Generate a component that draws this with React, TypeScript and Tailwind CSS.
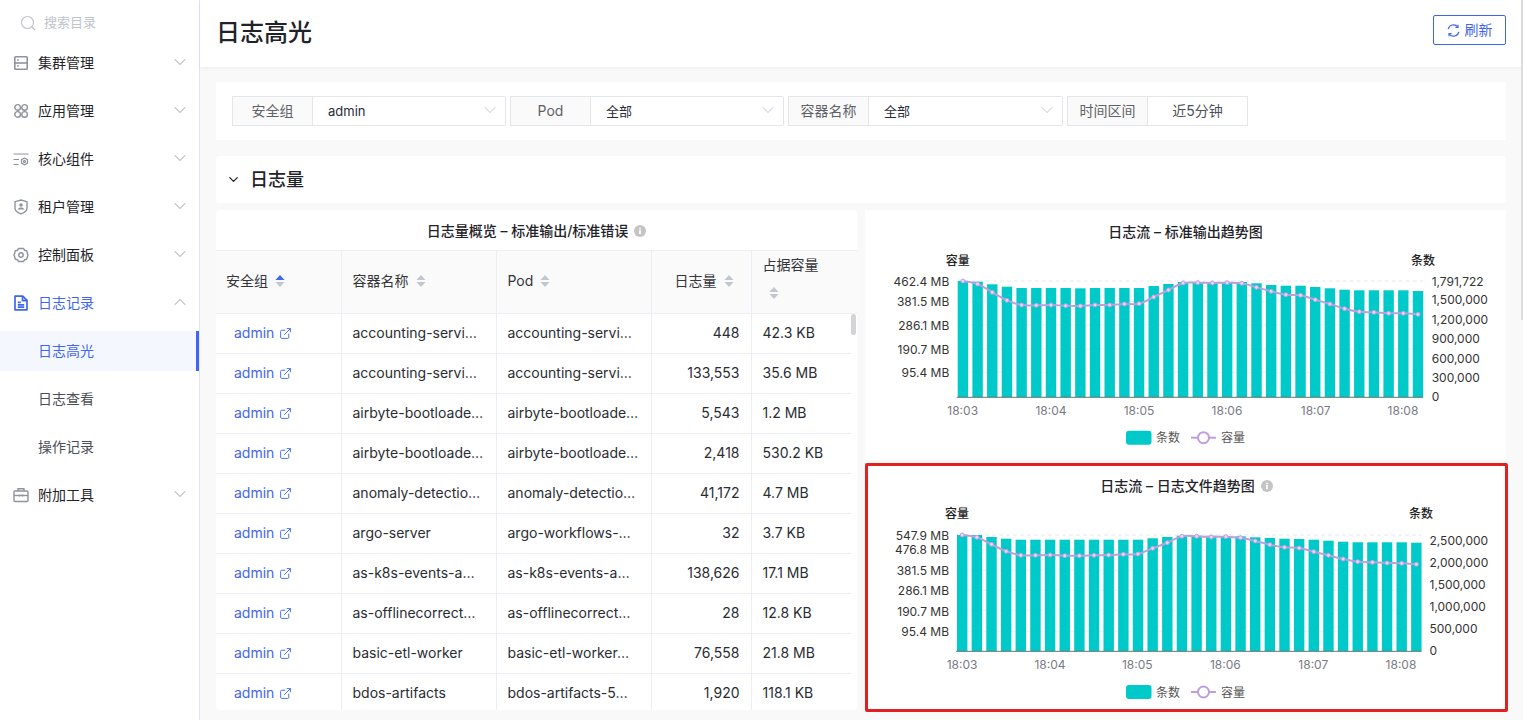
import type { ReactNode } from 'react';
import { ChevronDown, ChevronUp, ExternalLink } from 'lucide-react';

const FONT = '"Inter", "Noto Sans CJK SC", sans-serif';

const rows = [
  ['accounting-servi…', 'accounting-servi…', '448', '42.3 KB'],
  ['accounting-servi…', 'accounting-servi…', '133,553', '35.6 MB'],
  ['airbyte-bootloade…', 'airbyte-bootloade…', '5,543', '1.2 MB'],
  ['airbyte-bootloade…', 'airbyte-bootloade…', '2,418', '530.2 KB'],
  ['anomaly-detectio…', 'anomaly-detectio…', '41,172', '4.7 MB'],
  ['argo-server', 'argo-workflows-…', '32', '3.7 KB'],
  ['as-k8s-events-a…', 'as-k8s-events-a…', '138,626', '17.1 MB'],
  ['as-offlinecorrect…', 'as-offlinecorrect…', '28', '12.8 KB'],
  ['basic-etl-worker', 'basic-etl-worker…', '76,558', '21.8 MB'],
  ['bdos-artifacts', 'bdos-artifacts-5…', '1,920', '118.1 KB'],
];

// y values are page pixels, read off the picture, one per bar
const chartOne = {
  x0: 957.7,
  step: 14.68,
  base: 397.3,
  bars: [281, 281.7, 284.3, 286.7, 288, 288, 288, 288, 288.3, 288, 288, 288, 288, 286, 284, 282, 282, 282, 282, 282, 283.3, 285, 285.7, 285.7, 287, 288.3, 289.7, 290.3, 290.3, 290.3, 290.3, 291],
  line: [281, 284, 292.3, 300.3, 305, 305.3, 305, 305.7, 306, 305, 305, 304, 303.7, 297, 290, 283, 282.7, 283, 282.7, 283.3, 287.3, 291.3, 294.7, 295.3, 299.7, 304, 308.7, 311.7, 312.3, 313.3, 313.3, 314.3],
  grid: [301.7, 325, 349, 372.3],
  top: 281,
  left: [['462.4 MB', 281], ['381.5 MB', 301.7], ['286.1 MB', 325], ['190.7 MB', 349], ['95.4 MB', 372.3]] as [string, number][],
  right: [['1,791,722', 281], ['1,500,000', 299.7], ['1,200,000', 319], ['900,000', 338.7], ['600,000', 358], ['300,000', 377.7], ['0', 396.7]] as [string, number][],
  leftX: 949.3,
  rightX: 1431.7,
  nameY: 260,
  nameL: 957.7,
  nameR: 1423,
  ticks: [962.7, 1051, 1139, 1227, 1315.7, 1403],
  tickY: 410.7,
  legendY: 437.7,
};

const chartTwo = {
  x0: 957,
  step: 14.65,
  base: 651.3,
  bars: [535, 535, 537, 538.7, 539.7, 539.7, 539.7, 539.7, 539.7, 539.7, 539.7, 539.7, 539.7, 538.3, 537, 535.7, 535.7, 535.7, 536, 536.3, 537.3, 538, 538.7, 539, 539.7, 540.7, 541.7, 542.3, 542.3, 542.3, 542.3, 542.7],
  line: [535, 537.3, 544.3, 551.3, 555.3, 555.3, 555, 555.7, 555.7, 555.3, 555, 554.3, 554, 548.3, 542.7, 536.3, 536.3, 537, 536.7, 537.7, 541, 544.7, 547.3, 548, 551.7, 555.3, 559, 561.7, 562.3, 563, 563.3, 564.3],
  grid: [550, 570.3, 590.3, 610.3, 631.3],
  top: 535,
  left: [['547.9 MB', 535], ['476.8 MB', 549.7], ['381.5 MB', 570.7], ['286.1 MB', 590.7], ['190.7 MB', 611], ['95.4 MB', 631]] as [string, number][],
  right: [['2,500,000', 540.3], ['2,000,000', 562.3], ['1,500,000', 584.3], ['1,000,000', 606.7], ['500,000', 628.3], ['0', 650.7]] as [string, number][],
  leftX: 949,
  rightX: 1429.5,
  nameY: 513.3,
  nameL: 957,
  nameR: 1421,
  ticks: [962, 1050, 1137.3, 1225.3, 1313.3, 1401],
  tickY: 664.3,
  legendY: 692,
};

// catmull-rom through the points, flat enough to look like echarts smooth
function smoothPath(pts: [number, number][]) {
  let d = `M${pts[0][0]} ${pts[0][1]}`;
  for (let i = 0; i < pts.length - 1; i++) {
    const p0 = pts[Math.max(i - 1, 0)];
    const p1 = pts[i];
    const p2 = pts[i + 1];
    const p3 = pts[Math.min(i + 2, pts.length - 1)];
    const c1x = p1[0] + (p2[0] - p0[0]) / 6;
    const c1y = p1[1] + (p2[1] - p0[1]) / 6;
    const c2x = p2[0] - (p3[0] - p1[0]) / 6;
    const c2y = p2[1] - (p3[1] - p1[1]) / 6;
    d += ` C${c1x} ${c1y} ${c2x} ${c2y} ${p2[0]} ${p2[1]}`;
  }
  return d;
}

function Chart({ c, viewBox, width, height }: { c: typeof chartOne; viewBox: string; width: number; height: number }) {
  const barW = 10.4;
  const pts = c.line.map((y, i) => [c.x0 + i * c.step + barW / 2, y] as [number, number]);
  const endX = c.x0 + 31 * c.step + barW;
  return (
    <svg viewBox={viewBox} width={width} height={height} className="block" fontFamily={FONT} fontSize="12">
      <line x1={c.x0} x2={endX} y1={c.top} y2={c.top} stroke="#e6e8ee" strokeDasharray="4 3" />
      {c.grid.map((y) => (
        <line key={y} x1={c.x0} x2={endX} y1={y} y2={y} stroke="#f0f1f4" />
      ))}
      {c.bars.map((y, i) => (
        <rect key={i} x={c.x0 + i * c.step} y={y} width={barW} height={c.base - y} fill="#00c9c9" />
      ))}
      <line x1={c.x0 - 1} x2={endX} y1={c.base} y2={c.base} stroke="#6e7079" />
      <path d={smoothPath(pts)} fill="none" stroke="#bd9fe0" strokeWidth="2" />
      {pts.map(([x, y], i) => (
        <circle key={i} cx={x} cy={y} r="2" fill="#e4d8f3" stroke="#bd9fe0" />
      ))}
      {c.left.map(([t, y]) => (
        <text key={t} x={c.leftX} y={y} textAnchor="end" dominantBaseline="central" fill="#333">{t}</text>
      ))}
      {c.right.map(([t, y]) => (
        <text key={t} x={c.rightX} y={y} dominantBaseline="central" fill="#333">{t}</text>
      ))}
      <text x={c.nameL} y={c.nameY} textAnchor="middle" dominantBaseline="central" fill="#222" fontWeight="500">容量</text>
      <text x={c.nameR} y={c.nameY} textAnchor="middle" dominantBaseline="central" fill="#222" fontWeight="500">条数</text>
      {c.ticks.map((x, i) => (
        <text key={x} x={x} y={c.tickY} textAnchor="middle" dominantBaseline="central" fill="#7a7a85">{`18:0${i + 3}`}</text>
      ))}
      <rect x="1126" y={c.legendY - 7} width="25.5" height="14" rx="3" fill="#00c9c9" />
      <text x="1156" y={c.legendY} dominantBaseline="central" fill="#555">条数</text>
      <line x1="1191" x2="1216" y1={c.legendY} y2={c.legendY} stroke="#bd9fe0" strokeWidth="2" />
      <circle cx="1203.5" cy={c.legendY} r="5.5" fill="#fff" stroke="#bd9fe0" strokeWidth="2" />
      <text x="1221" y={c.legendY} dominantBaseline="central" fill="#555">容量</text>
    </svg>
  );
}

function SortIcon({ active }: { active?: boolean }) {
  return (
    <svg width="10" height="14" viewBox="0 0 10 14" className="shrink-0">
      <path d="M5 1 L9.5 6 H0.5 Z" fill={active ? '#3f66f0' : '#c2c6ce'} />
      <path d="M5 13 L9.5 8 H0.5 Z" fill="#c2c6ce" />
    </svg>
  );
}

function InfoIcon() {
  return (
    <svg width="12" height="12" viewBox="0 0 12 12" className="shrink-0">
      <circle cx="6" cy="6" r="6" fill="#c4c4c4" />
      <rect x="5.2" y="5" width="1.6" height="4.2" fill="#fff" />
      <rect x="5.2" y="2.8" width="1.6" height="1.5" fill="#fff" />
    </svg>
  );
}

const G = '#8f939e';

const icons: Record<string, ReactNode> = {
  cluster: (
    <svg width="16" height="16" viewBox="0 0 16 16" fill="none" stroke={G} strokeWidth="1.6">
      <rect x="1.8" y="1.8" width="12.4" height="12.4" rx="0.8" />
      <path d="M2 8h12" />
      <path d="M4.2 5h1.6M4.2 11h1.6" />
    </svg>
  ),
  app: (
    <svg width="16" height="16" viewBox="0 0 16 16" fill="none" stroke={G} strokeWidth="1.4">
      <circle cx="4.6" cy="4.4" r="2.8" />
      <circle cx="11.6" cy="4.4" r="2.8" />
      <circle cx="4.6" cy="11.4" r="2.8" />
      <circle cx="11.6" cy="11.4" r="2.8" />
    </svg>
  ),
  core: (
    <svg width="16" height="16" viewBox="0 0 16 16" fill="none" stroke={G} strokeWidth="1.2">
      <path d="M0.5 3h15M0.5 8.5h5.5M0.5 13.5h5" />
      <path d="M11.5 7l3 1.7v3.4l-3 1.7-3-1.7V8.7z" />
      <circle cx="11.5" cy="10.4" r="1" />
    </svg>
  ),
  tenant: (
    <svg width="16" height="16" viewBox="0 0 16 16" fill="none" stroke={G} strokeWidth="1.4">
      <path d="M8 1l6 1.7v6.5c0 2.4-2.6 4.4-6 5.7-3.4-1.3-6-3.3-6-5.7V2.7z" />
      <circle cx="8" cy="6" r="1.8" fill={G} stroke="none" />
      <path d="M4.6 10.6c.5-1.6 1.8-2.2 3.4-2.2s2.9.6 3.4 2.2z" fill={G} stroke="none" />
    </svg>
  ),
  panel: (
    <svg width="16" height="16" viewBox="0 0 16 16" fill="none" stroke={G} strokeWidth="1.4">
      <path d="M5.4 1.5h5.2l1 1.8 2 .5L15 8l-1.4 4.2-2 .5-1 1.8H5.4l-1-1.8-2-.5L1 8l1.4-4.2 2-.5z" strokeLinejoin="round" />
      <circle cx="8" cy="8" r="2.2" />
    </svg>
  ),
  log: (
    <svg width="16" height="16" viewBox="0 0 16 16" fill="none" stroke="#3f66f0" strokeWidth="1.7">
      <path d="M2 1.2h7.8l4.2 4.2v9.4H2z" strokeLinejoin="round" />
      <path d="M9.5 1.5v4.2h4.2" />
      <path d="M4.8 7.4h3M4.8 9.8h6.4M4.8 12.2h6.4" />
    </svg>
  ),
  tool: (
    <svg width="16" height="16" viewBox="0 0 16 16" fill="none" stroke={G} strokeWidth="1.4">
      <rect x="1" y="4" width="14" height="10.5" rx="1" />
      <path d="M5 4V1.8h6V4" />
      <path d="M1 8.5h14" />
      <path d="M6.5 7.5v2M9.5 7.5v2" />
    </svg>
  ),
};

function MenuItem({ icon, label, active, open }: { icon: string; label: string; active?: boolean; open?: boolean }) {
  return (
    <div className="h-12 flex items-center pl-[13px] pr-[9px]">
      <span className="w-[16px] h-[16px] shrink-0">{icons[icon]}</span>
      <span className={`ml-[9px] flex-1 text-sm ${active ? 'text-[#3f66f0]' : 'text-[#1f2329]'}`}>{label}</span>
      {open ? (
        <ChevronUp size={20} strokeWidth={1} className="text-[#888c94] -mt-[2px]" />
      ) : (
        <ChevronDown size={20} strokeWidth={1} className="text-[#888c94] -mt-[2px]" />
      )}
    </div>
  );
}

function SubItem({ label, active }: { label: string; active?: boolean }) {
  return (
    <div className="h-12 flex items-center">
      <div className={`h-10 w-full flex items-center pl-[38px] text-sm ${active ? 'bg-[#f5f7ff] text-[#3f66f0] border-r-[3px] border-[#3f66f0]' : 'text-[#4c4f56]'}`}>
        {label}
      </div>
    </div>
  );
}

function Filter({ label, value, w, arrow = true }: { label: string; value: string; w: string; arrow?: boolean }) {
  return (
    <div className={`h-[30px] flex text-sm ${w}`}>
      <div className="w-[81px] shrink-0 flex items-center justify-center bg-[#fafafa] border border-[#e4e6ea] text-[#5f6168]">{label}</div>
      {arrow ? (
        <div className="flex-1 flex items-center justify-between pl-[15px] pr-[5px] border border-l-0 border-[#e4e6ea] rounded-r-[2px] text-[13px] text-[#2a2c3a]">
          <span>{value}</span>
          <ChevronDown size={20} strokeWidth={0.8} className="text-[#a8abb3] -mt-[2px]" />
        </div>
      ) : (
        <div className="flex-1 flex items-center justify-center border border-l-0 border-[#e4e6ea] text-[#4c4f56]">{value}</div>
      )}
    </div>
  );
}

function Th({ children, className = '' }: { children: ReactNode; className?: string }) {
  return <th className={`border-r border-b border-[#eceef4] bg-[#fafafa] font-normal text-[#33353b] ${className}`}>{children}</th>;
}

export default function App() {
  return (
    <div className="h-screen w-full overflow-hidden flex bg-[#f9f9f9] relative" style={{ fontFamily: FONT }}>
      <aside className="w-[200px] shrink-0 bg-white border-r border-[#e3e5ee]">
        <div className="h-[39px] pt-[6px] pl-[20px] flex items-center gap-[8px] text-[13px] text-[#c0c4cc]">
          <svg width="16" height="16" viewBox="0 0 16 16" fill="none" stroke="#c0c4cc" strokeWidth="1.2">
            <circle cx="7.5" cy="7.5" r="6" />
            <path d="M12 12l3 3" />
          </svg>
          搜索目录
        </div>
        <MenuItem icon="cluster" label="集群管理" />
        <MenuItem icon="app" label="应用管理" />
        <MenuItem icon="core" label="核心组件" />
        <MenuItem icon="tenant" label="租户管理" />
        <MenuItem icon="panel" label="控制面板" />
        <MenuItem icon="log" label="日志记录" active open />
        <SubItem label="日志高光" active />
        <SubItem label="日志查看" />
        <SubItem label="操作记录" />
        <MenuItem icon="tool" label="附加工具" />
      </aside>

      <div className="flex-1 min-w-0 flex flex-col">
        <header className="h-[67px] shrink-0 bg-white shadow-[0_1px_4px_rgba(0,0,0,0.06)] flex items-center justify-between pl-4 pr-[17px]">
          <h1 className="text-2xl font-medium text-[#1f2329] -mt-[2px]">日志高光</h1>
          <button className="w-[73px] h-[30px] -mt-[7px] flex items-center justify-center gap-[5px] border border-[#3f66f0] rounded-[2px] text-sm text-[#3f66f0]">
            <svg width="13" height="13" viewBox="0 0 13 13" fill="none" stroke="#3f66f0" strokeWidth="1.2">
              <path d="M1.2 5.2A5.4 5.4 0 0 1 10.6 2.7" />
              <path d="M11.8 7.8A5.4 5.4 0 0 1 2.4 10.3" />
              <path d="M11 .8v2.6H8.4M2 12.2V9.6h2.6" />
            </svg>
            刷新
          </button>
        </header>

        <main className="flex-1 min-h-0 pt-[15px] pl-4 pr-[17px]">
          <div className="h-[58px] bg-white flex items-center gap-[4px] pl-4">
            <Filter label="安全组" value="admin" w="w-[274px]" />
            <Filter label="Pod" value="全部" w="w-[274px]" />
            <Filter label="容器名称" value="全部" w="w-[275px]" />
            <Filter label="时间区间" value="近5分钟" w="w-[181px]" arrow={false} />
          </div>

          <div className="h-[47px] mt-4 bg-white rounded-[4px] flex items-center pl-[10px] gap-[9px] text-lg font-medium text-[#1f2329]">
            <ChevronDown size={15} strokeWidth={2} />
            日志量
          </div>

          <div className="mt-[7px] flex gap-2 items-start">
            <section className="w-[641px] h-[500px] shrink-0 bg-white rounded-[4px] relative overflow-hidden">
              <div className="h-[41px] pt-[2px] flex items-center justify-center gap-[6px] text-sm font-medium text-[#1f2329] border-b border-[#eceef4]">
                日志量概览 – 标准输出/标准错误 <InfoIcon />
              </div>
              <table className="table-fixed w-[641px] text-sm border-collapse">
                <colgroup>
                  <col className="w-[125px]" />
                  <col className="w-[155px]" />
                  <col className="w-[155px]" />
                  <col className="w-[100px]" />
                  <col className="w-[106px]" />
                </colgroup>
                <thead>
                  <tr className="h-[62px]">
                    <Th>
                      <div className="flex items-center gap-[7px] pl-[10px] pb-[2px]">安全组 <SortIcon active /></div>
                    </Th>
                    <Th>
                      <div className="flex items-center gap-[7px] pl-[11px] pb-[2px]">容器名称 <SortIcon /></div>
                    </Th>
                    <Th>
                      <div className="flex items-center gap-[7px] pl-[11px] pb-[2px]">Pod <SortIcon /></div>
                    </Th>
                    <Th>
                      <div className="flex items-center justify-end gap-[7px] pr-[17px] pb-[2px]">日志量 <SortIcon /></div>
                    </Th>
                    <Th className="border-r-0">
                      <div className="pb-[10px]">
                        <div className="pl-[11px] text-left leading-[22px]">占据容量</div>
                        <div className="pl-[17px] pt-[10px]"><SortIcon /></div>
                      </div>
                    </Th>
                  </tr>
                </thead>
                <tbody className="text-[#2a2c33]">
                  {rows.map((r, i) => (
                    <tr key={i} className="h-10">
                      <td className="border-r border-b border-[#eceef4] pl-[18px]">
                        <span className="flex items-center gap-[5px] text-[#3f66f0]">
                          admin <ExternalLink size={13} strokeWidth={1.7} />
                        </span>
                      </td>
                      <td className="border-r border-b border-[#eceef4] pl-[11px] whitespace-nowrap overflow-hidden">{r[0]}</td>
                      <td className="border-r border-b border-[#eceef4] pl-[11px] whitespace-nowrap overflow-hidden">{r[1]}</td>
                      <td className="border-r border-b border-[#eceef4] pr-[11px] text-right">{r[2]}</td>
                      <td className="border-b border-[#eceef4] pl-[11px] pr-[6px]">{r[3]}</td>
                    </tr>
                  ))}
                </tbody>
              </table>
              {/* table body's scrollbar */}
              <div className="absolute right-0 top-[104px] bottom-0 w-[6px] bg-white">
                <div className="w-[5px] h-[21px] rounded-full bg-[#d4d4d6]" />
              </div>
            </section>

            <div className="flex-1 min-w-0">
              <section className="h-[250px] bg-white rounded-[2px]">
                <div className="h-[42px] pt-[2px] flex items-center justify-center text-sm font-medium text-[#1f2329]">
                  日志流 – 标准输出趋势图
                </div>
                <Chart c={chartOne} viewBox="865 252 641 208" width={641} height={208} />
              </section>
              <section className="w-[643px] h-[249px] mt-[3px] bg-white border-[3px] border-[#e3201f] rounded-[2px]">
                <div className="h-[40px] flex items-center justify-center gap-[6px] text-sm font-medium text-[#1f2329]">
                  日志流 – 日志文件趋势图 <InfoIcon />
                </div>
                <Chart c={chartTwo} viewBox="868 506 637 203" width={637} height={203} />
              </section>
            </div>
          </div>
        </main>
      </div>

      {/* page scrollbar thumb */}
      <div className="absolute right-0 top-0 w-[2px] h-[320px] bg-[#dcdcdc]" />
    </div>
  );
}
